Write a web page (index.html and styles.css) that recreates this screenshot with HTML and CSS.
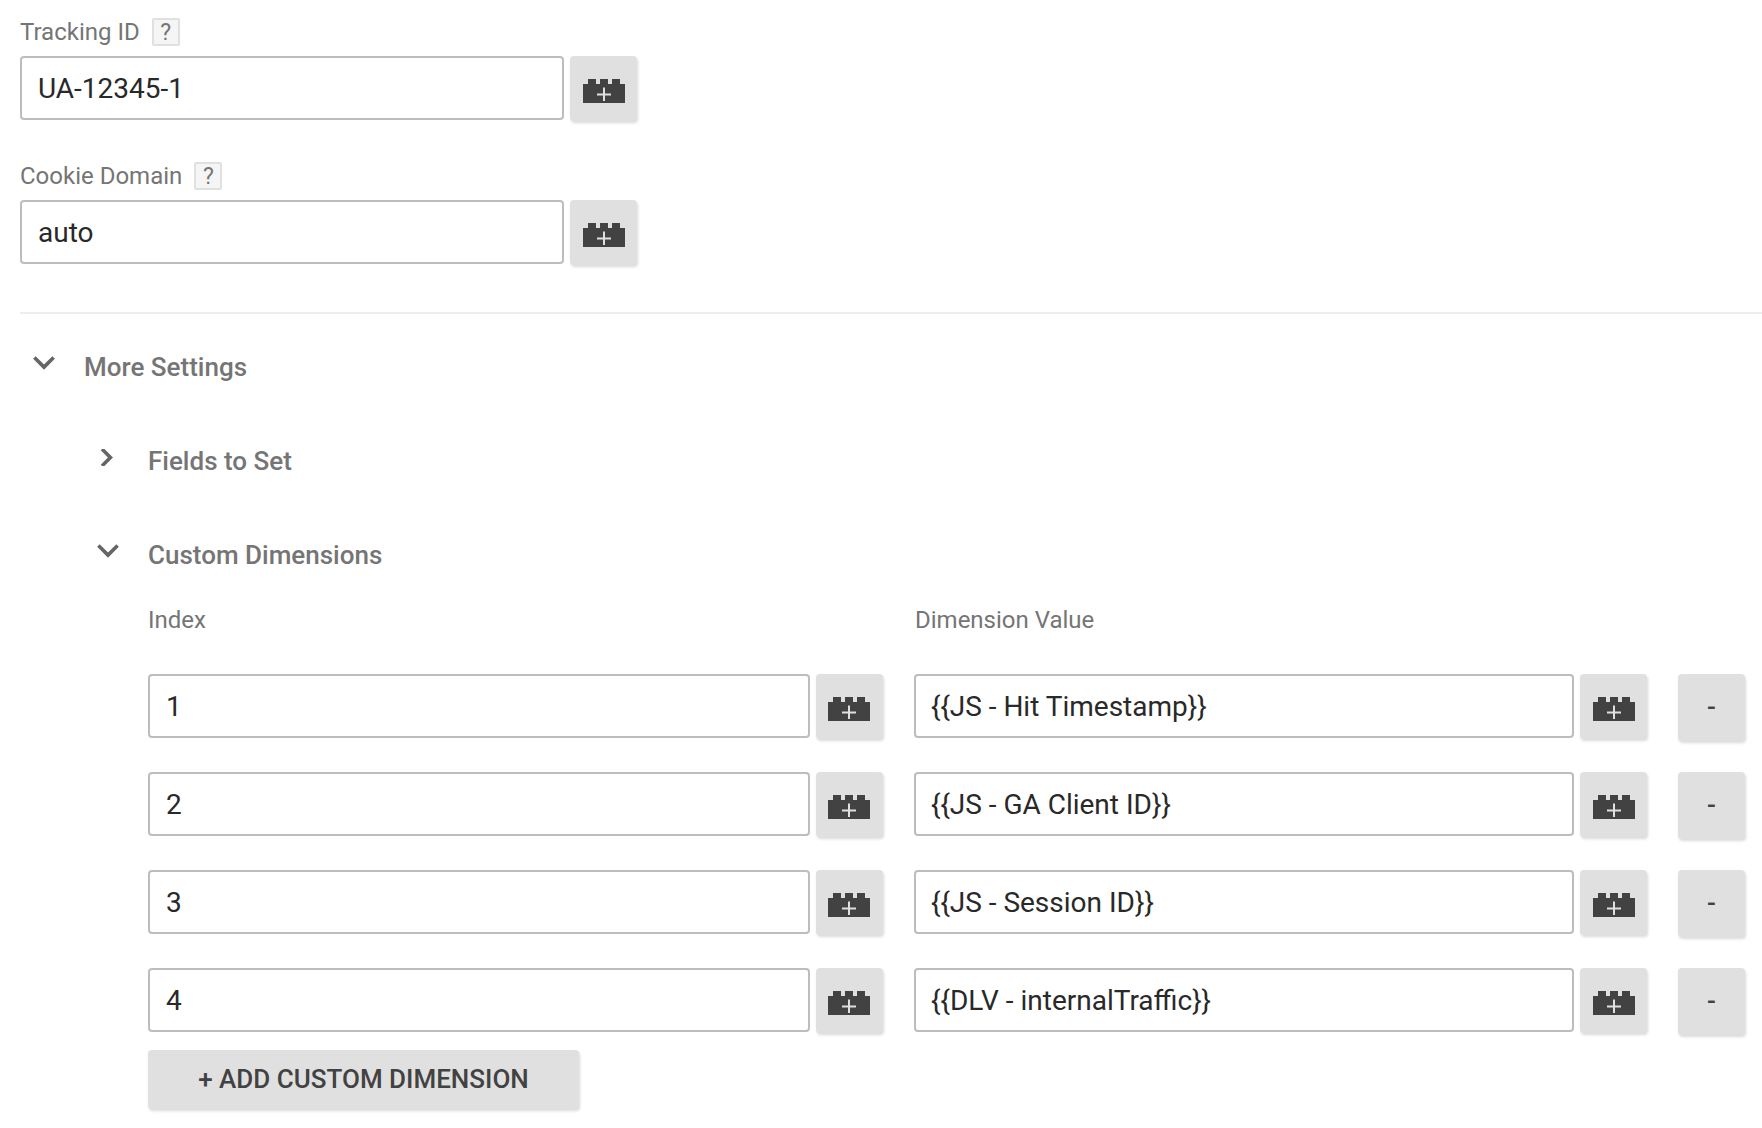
FILE: index.html
```html
<!DOCTYPE html>
<html lang="en">
<head>
  <meta charset="UTF-8" />
  <title>Tag Configuration</title>
  <link rel="stylesheet" href="styles.css">
</head>
<body>
  <svg class="defs" width="0" height="0" aria-hidden="true">
    <symbol id="brick" viewBox="0 0 42 24">
      <path fill="#424242" d="M0 5h5V0h8v5h4V0h8v5h4V0h8v5h5v19H0z"/>
      <path fill="#e0e0e0" d="M14 14.5h14v2H14zM20 8.5h2v13.5h-2z"/>
    </symbol>
  </svg>

  <div class="page">
    <div class="setting">
      <div class="label">Tracking ID <span class="help">?</span></div>
      <div class="row">
        <div class="field field-top">UA-12345-1</div>
        <button class="var-btn"><svg class="brick"><use href="#brick"/></svg></button>
      </div>
    </div>

    <div class="setting">
      <div class="label">Cookie Domain <span class="help">?</span></div>
      <div class="row">
        <div class="field field-top">auto</div>
        <button class="var-btn"><svg class="brick"><use href="#brick"/></svg></button>
      </div>
    </div>

    <hr class="divider">

    <div class="section section-main">
      <svg class="chevron" viewBox="0 0 20 14"><path d="M2 2l8 8 8-8"/></svg>
      <span>More Settings</span>
    </div>

    <div class="nested">
      <div class="section section-sub">
        <svg class="chevron" viewBox="0 0 20 14"><path d="M5 0l7 7-7 7" /></svg>
        <span>Fields to Set</span>
      </div>
      <div class="section section-sub">
        <svg class="chevron" viewBox="0 0 20 14"><path d="M2 2l8 8 8-8"/></svg>
        <span>Custom Dimensions</span>
      </div>
    </div>

    <div class="table">
      <div class="table-head">
        <div class="col-index">Index</div>
        <div class="col-value">Dimension Value</div>
      </div>

      <div class="row dim-row">
        <div class="field col-field-index">1</div>
        <button class="var-btn"><svg class="brick"><use href="#brick"/></svg></button>
        <div class="field col-field-value">{{JS - Hit Timestamp}}</div>
        <button class="var-btn"><svg class="brick"><use href="#brick"/></svg></button>
        <button class="remove-btn">-</button>
      </div>
      <div class="row dim-row">
        <div class="field col-field-index">2</div>
        <button class="var-btn"><svg class="brick"><use href="#brick"/></svg></button>
        <div class="field col-field-value">{{JS - GA Client ID}}</div>
        <button class="var-btn"><svg class="brick"><use href="#brick"/></svg></button>
        <button class="remove-btn">-</button>
      </div>
      <div class="row dim-row">
        <div class="field col-field-index">3</div>
        <button class="var-btn"><svg class="brick"><use href="#brick"/></svg></button>
        <div class="field col-field-value">{{JS - Session ID}}</div>
        <button class="var-btn"><svg class="brick"><use href="#brick"/></svg></button>
        <button class="remove-btn">-</button>
      </div>
      <div class="row dim-row">
        <div class="field col-field-index">4</div>
        <button class="var-btn"><svg class="brick"><use href="#brick"/></svg></button>
        <div class="field col-field-value">{{DLV - internalTraffic}}</div>
        <button class="var-btn"><svg class="brick"><use href="#brick"/></svg></button>
        <button class="remove-btn">-</button>
      </div>

      <button class="add-btn">+ ADD CUSTOM DIMENSION</button>
    </div>
  </div>
</body>
</html>
```

FILE: styles.css
```css
* {
  box-sizing: border-box;
}
html, body {
  margin: 0;
  height: 1128px;
  overflow: hidden;
  background: #fff;
}
body {
  font-family: Roboto, sans-serif;
  color: #212121;
}
.defs {
  display: block;
  height: 0;
}

.page {
  padding: 18px 0 0 20px;
}

.setting + .setting {
  margin-top: 41px;
}

.label {
  display: flex;
  align-items: center;
  height: 28px;
  margin-bottom: 10px;
  font-size: 24px;
  color: #757575;
}
.help {
  display: flex;
  align-items: center;
  justify-content: center;
  width: 28px;
  height: 28px;
  margin-left: 12px;
  font-size: 23px;
  color: #757575;
  background: #f5f5f5;
  border: 2px solid #e0e0e0;
  border-radius: 2px;
}

.row {
  display: flex;
  align-items: flex-start;
}

.field {
  display: flex;
  align-items: center;
  height: 64px;
  padding: 1px 0 0 16px;
  font-size: 28px;
  color: #292929;
  background: #fff;
  border: 2px solid #bdbdbd;
  border-radius: 4px;
}
.field-top {
  width: 544px;
}

.var-btn, .remove-btn, .add-btn {
  border: none;
  border-radius: 4px;
  background: #e0e0e0;
  box-shadow: 1px 2px 3px rgba(0,0,0,0.15);
  font-family: inherit;
  padding: 0;
}
.var-btn {
  display: flex;
  align-items: center;
  justify-content: center;
  width: 67px;
  height: 65px;
  margin-left: 6px;
  padding-top: 5px;
}
.col-field-index + .var-btn {
  padding-right: 2px;
}
.brick {
  width: 42px;
  height: 24px;
}

.divider {
  height: 2px;
  margin: 47px 0 0;
  border: none;
  background: #eee;
}

.section {
  display: flex;
  align-items: center;
  height: 40px;
  font-size: 26px;
  font-weight: 500;
  color: #757575;
}
.section span {
  margin-left: 28px;
}
.chevron {
  width: 24px;
  height: 17px;
  margin-top: -8px;
  fill: none;
  stroke: #666;
  stroke-width: 3;
}
.section-main {
  margin-top: 33px;
  padding-left: 12px;
}

.nested {
  padding-left: 76px;
}
.section-sub {
  margin-top: 54px;
}

.table {
  padding-left: 128px;
}
.table-head {
  display: flex;
  height: 30px;
  margin-top: 31px;
  margin-bottom: 38px;
  font-size: 24px;
  color: #757575;
}
.col-index {
  width: 767px;
}

.dim-row {
  margin-bottom: 31px;
}
.col-field-index {
  width: 662px;
}
.col-field-value {
  width: 660px;
  margin-left: 31px;
  padding-left: 15px;
}
.remove-btn {
  width: 67px;
  height: 67px;
  margin-left: 31px;
  padding-bottom: 2px;
  font-size: 26px;
  font-weight: 500;
  color: #424242;
}

.add-btn {
  display: block;
  width: 431px;
  height: 59px;
  margin-top: -16px;
  padding-bottom: 2px;
  font-size: 26px;
  font-weight: 500;
  color: #424242;
}
```
